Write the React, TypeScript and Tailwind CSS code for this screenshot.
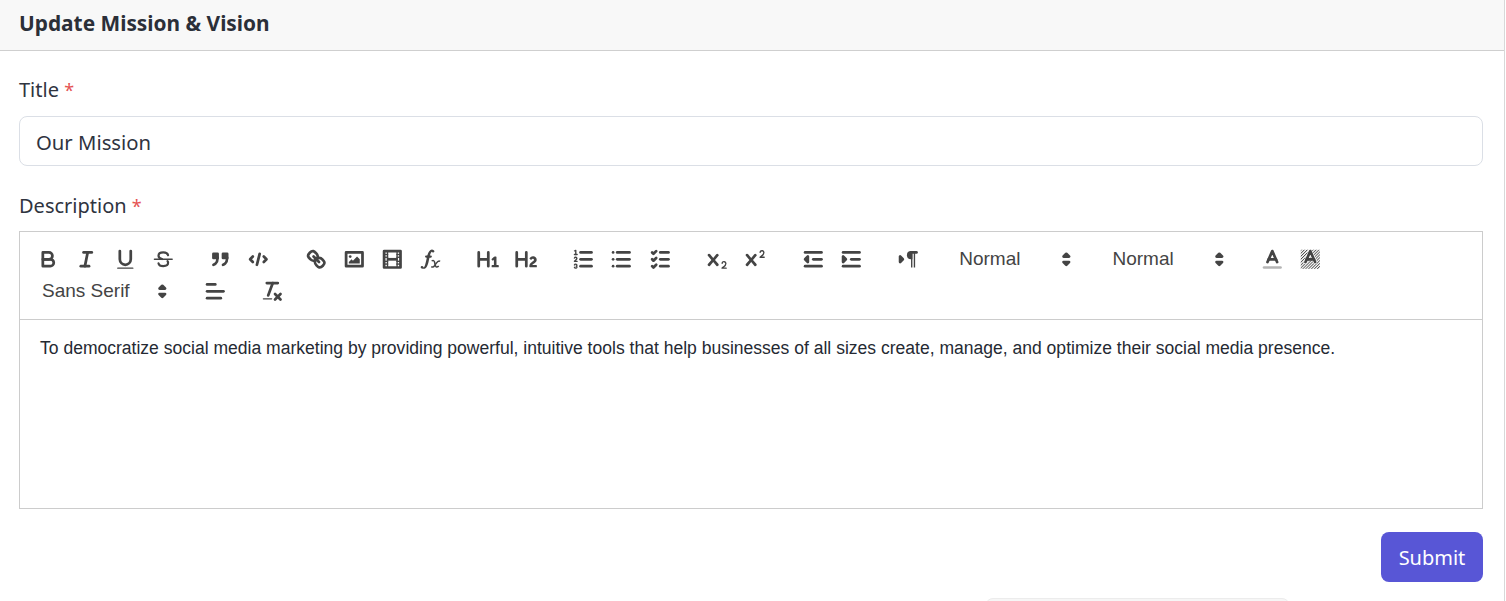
import React from "react";

const S = ({ children }: { children: React.ReactNode }) => (
  <svg viewBox="0 0 18 18" className="w-[24.6px] h-[24.6px] fill-none stroke-[#444] [stroke-width:2px] [stroke-linecap:round] [stroke-linejoin:round]">
    {children}
  </svg>
);
const F = (p: React.SVGProps<SVGPathElement>) => <path {...p} fill="#444" stroke="none" />;
const R = (p: React.SVGProps<SVGRectElement>) => <rect {...p} fill="#444" stroke="none" />;

const Btn = ({ children }: { children: React.ReactNode }) => (
  <button className="w-[38.2px] h-[32.4px] flex items-center justify-center shrink-0">{children}</button>
);
const Group = ({ children }: { children: React.ReactNode }) => (
  <span className="flex mr-[19.2px] shrink-0">{children}</span>
);
const Picker = ({ label, w }: { label: string; w: string }) => (
  <span className={`${w} h-[32.4px] flex items-center justify-between pl-[12.5px] pr-[2px] text-[19px] text-[#444] font-["Liberation_Sans",sans-serif]`}>
    <span>{label}</span>
    <S>
      <polygon points="7 11 9 13 11 11 7 11" fill="#444" />
      <polygon points="7 7 9 5 11 7 7 7" fill="#444" />
    </S>
  </span>
);
const X = "M9.65,5.241a1,1,0,0,0-1.409.108L6,7.964,3.759,5.349A1,1,0,0,0,2.192,6.59178Q2.21541,6.6213,2.241,6.649L4.684,9.5,2.241,12.35A1,1,0,0,0,3.71,13.70722q0.02557-.02768.049-0.05722L6,11.036,8.241,13.65a1,1,0,1,0,1.567-1.24277Q9.78459,12.3777,9.759,12.35L7.316,9.5,9.759,6.651A1,1,0,0,0,9.65,5.241Z";

const Toolbar = () => (
  <div className="flex flex-wrap pl-[9.5px] pt-[11px] pb-[10.8px] border-b border-[#ccc]">
    <Group>
      <Btn><S><path d="M5,4H9.5A2.5,2.5,0,0,1,12,6.5v0A2.5,2.5,0,0,1,9.5,9H5A0,0,0,0,1,5,9V4A0,0,0,0,1,5,4Z" /><path d="M5,9h5.5A2.5,2.5,0,0,1,13,11.5v0A2.5,2.5,0,0,1,10.5,14H5a0,0,0,0,1,0,0V9A0,0,0,0,1,5,9Z" /></S></Btn>
      <Btn><S><line x1="7" x2="13" y1="4" y2="4" /><line x1="5" x2="11" y1="14" y2="14" /><line x1="8" x2="10" y1="14" y2="4" /></S></Btn>
      <Btn><S><path d="M5,3V9a4.012,4.012,0,0,0,4,4H9a4.012,4.012,0,0,0,4-4V3" /><R height="1" rx=".5" ry=".5" width="12" x="3" y="15" /></S></Btn>
      <Btn><S><line x1="2.5" x2="15.5" y1="9" y2="9" className="[stroke-width:1px]" /><path d="M12.5,6C12.2,4.8,10.8,4,9,4C7,4,5.5,5,5.5,6.4C5.5,7.6,6.5,8.4,8,8.8" className="[stroke-width:1.6px]" /><path d="M5.5,12C5.8,13.2,7.2,14,9,14c2,0,3.5-1,3.5-2.4c0-.5-.1-.9-.4-1.3" className="[stroke-width:1.6px]" /></S></Btn>
    </Group>
    <Group>
      <Btn><S><rect fill="#444" height="3" width="3" x="4" y="5" /><rect fill="#444" height="3" width="3" x="11" y="5" /><path d="M7,8c0,4.031-3,5-3,5" /><path d="M14,8c0,4.031-3,5-3,5" /></S></Btn>
      <Btn><S><polyline points="5 7 3 9 5 11" /><polyline points="13 7 15 9 13 11" /><line x1="10" x2="8" y1="5" y2="13" /></S></Btn>
    </Group>
    <Group>
      <Btn><S><line x1="7" x2="11" y1="7" y2="11" /><path d="M8.9,4.577a3.476,3.476,0,0,1,.36,4.679A3.476,3.476,0,0,1,4.577,8.9C3.185,7.5,2.035,6.4,4.217,4.217S7.5,3.185,8.9,4.577Z" /><path d="M13.423,9.1a3.476,3.476,0,0,0-4.679-.36,3.476,3.476,0,0,0,.36,4.679c1.392,1.392,2.5,2.542,4.679.36S14.815,10.5,13.423,9.1Z" /></S></Btn>
      <Btn><S><rect height="10" width="12" x="3" y="4" /><circle cx="6" cy="7" r="1" fill="#444" stroke="none" /><polyline points="5 12 5 11 7 9 8 10 11 7 13 9 13 12 5 12" fill="#444" stroke="none" /></S></Btn>
      <Btn><S><rect height="12" width="12" x="3" y="3" /><R height="12" width="1" x="5" y="3" /><R height="12" width="1" x="12" y="3" /><R height="2" width="8" x="5" y="8" /><R height="1" width="3" x="3" y="5" /><R height="1" width="3" x="3" y="7" /><R height="1" width="3" x="3" y="10" /><R height="1" width="3" x="3" y="12" /><R height="1" width="3" x="12" y="5" /><R height="1" width="3" x="12" y="7" /><R height="1" width="3" x="12" y="10" /><R height="1" width="3" x="12" y="12" /></S></Btn>
      <Btn><S><F d="M11.759,2.482a2.561,2.561,0,0,0-3.53.607A7.656,7.656,0,0,0,6.8,6.2C6.109,9.188,5.275,14.677,4.15,14.927a1.545,1.545,0,0,0-1.3-.933A0.922,0.922,0,0,0,2,15.036S1.954,16,4.119,16s3.091-2.691,3.7-5.553c0.177-.826.36-1.726,0.554-2.6L8.775,6.2c0.381-1.421.807-2.521,1.306-2.676a1.014,1.014,0,0,0,1.02.56A0.966,0.966,0,0,0,11.759,2.482Z" /><R height="1.6" rx=".8" ry=".8" width="5" x="5.15" y="6.2" /><path d="M10,10.2c1.1,-.5 1.8,-.3 2.1,.8l.7,2.8c.3,1 1,1.3 2.4,.2" className="[stroke-width:1.1px] [stroke-linecap:butt]" /><path d="M16.2,10.5c-1.1,-.7 -1.9,0 -2.9,1.5l-1.2,1.7c-.7,1 -1.4,1.2 -2.4,.6" className="[stroke-width:1.1px] [stroke-linecap:butt]" /></S></Btn>
    </Group>
    <Group>
      <Btn><S><F d="M10,4V14a1,1,0,0,1-2,0V10H3v4a1,1,0,0,1-2,0V4A1,1,0,0,1,3,4V8H8V4a1,1,0,0,1,2,0Zm6.06787,9.209H14.98975V7.59863a.54085.54085,0,0,0-.605-.60547h-.62744a1.01119,1.01119,0,0,0-.748.29688L11.645,8.56641a.5435.5435,0,0,0-.022.8584l.28613.30762a.53861.53861,0,0,0,.84717.0332l.09912-.08789a1.2137,1.2137,0,0,0,.2417-.35254h.02246s-.01123.30859-.01123.60547V13.209H12.041a.54085.54085,0,0,0-.605.60547v.43945a.54085.54085,0,0,0,.605.60547h4.02686a.54085.54085,0,0,0,.605-.60547v-.43945A.54085.54085,0,0,0,16.06787,13.209Z" /></S></Btn>
      <Btn><S><F d="M16.73975,13.81445v.43945a.54085.54085,0,0,1-.605.60547H11.855a.58392.58392,0,0,1-.64893-.60547V14.0127c0-2.90527,3.39941-3.42187,3.39941-4.55469a.77675.77675,0,0,0-.84717-.78125,1.17684,1.17684,0,0,0-.83594.38477c-.2749.26367-.561.374-.85791.13184l-.4292-.34082c-.30811-.24219-.38525-.51758-.1543-.81445a2.97155,2.97155,0,0,1,2.45361-1.17676,2.45393,2.45393,0,0,1,2.68408,2.40918c0,2.45312-3.1792,2.92676-3.27832,3.93848h2.79443A.54085.54085,0,0,1,16.73975,13.81445ZM9,3A.99974.99974,0,0,0,8,4V8H3V4A1,1,0,0,0,1,4V14a1,1,0,0,0,2,0V10H8v4a1,1,0,0,0,2,0V4A.99974.99974,0,0,0,9,3Z" /></S></Btn>
    </Group>
    <Group>
      <Btn><S><line x1="7" x2="15" y1="4" y2="4" /><line x1="7" x2="15" y1="9" y2="9" /><line x1="7" x2="15" y1="14" y2="14" /><line x1="2.5" x2="4.5" y1="5.5" y2="5.5" className="[stroke-width:1px]" /><F d="M3.5,6A0.5,0.5,0,0,1,3,5.5V3.085l-0.276.138A0.5,0.5,0,0,1,2.053,3c-0.124-.247-0.023-0.324.224-0.447l1-.5A0.5,0.5,0,0,1,4,2.5v3A0.5,0.5,0,0,1,3.5,6Z" /><path d="M4.5,10.5h-2c0-.234,1.85-1.076,1.85-2.234A0.959,0.959,0,0,0,2.5,8.156" className="[stroke-width:1px]" /><path d="M2.5,14.846a0.959,0.959,0,0,0,1.85-.109A0.7,0.7,0,0,0,3.75,14a0.688,0.688,0,0,0,.6-0.736,0.959,0.959,0,0,0-1.85-.109" className="[stroke-width:1px]" /></S></Btn>
      <Btn><S><line x1="6" x2="15" y1="4" y2="4" /><line x1="6" x2="15" y1="9" y2="9" /><line x1="6" x2="15" y1="14" y2="14" /><line x1="3" x2="3" y1="4" y2="4" /><line x1="3" x2="3" y1="9" y2="9" /><line x1="3" x2="3" y1="14" y2="14" /></S></Btn>
      <Btn><S><line x1="9" x2="15" y1="4" y2="4" /><polyline points="3 4 4 5 6 3" /><line x1="9" x2="15" y1="14" y2="14" /><polyline points="3 14 4 15 6 13" /><line x1="9" x2="15" y1="9" y2="9" /><polyline points="3 9 4 10 6 8" /></S></Btn>
    </Group>
    <Group>
      <Btn><S><F d="M15.5,15H13.861a3.858,3.858,0,0,0,1.914-2.975,1.8,1.8,0,0,0-1.6-1.751A1.921,1.921,0,0,0,12.021,11.7a0.50013,0.50013,0,1,0,.957.291h0a0.914,0.914,0,0,1,1.053-.725,0.81,0.81,0,0,1,.744.762c0,1.076-1.16971,1.86982-1.93971,2.43082A1.45639,1.45639,0,0,0,12,15.5a0.5,0.5,0,0,0,.5.5h3A0.5,0.5,0,0,0,15.5,15Z" /><F d={X} /></S></Btn>
      <Btn><S><F d="M15.5,7H13.861a4.015,4.015,0,0,0,1.914-2.975,1.8,1.8,0,0,0-1.6-1.751A1.922,1.922,0,0,0,12.021,3.7a0.5,0.5,0,1,0,.957.291,0.917,0.917,0,0,1,1.053-.725,0.81,0.81,0,0,1,.744.762c0,1.077-1.164,1.925-1.934,2.486A1.423,1.423,0,0,0,12,7.5a0.5,0.5,0,0,0,.5.5h3A0.5,0.5,0,0,0,15.5,7Z" /><F d={X} /></S></Btn>
    </Group>
    <Group>
      <Btn><S><line x1="3" x2="15" y1="14" y2="14" /><line x1="3" x2="15" y1="4" y2="4" /><line x1="9" x2="15" y1="9" y2="9" /><polyline points="5 7 5 11 3 9 5 7" fill="#444" /></S></Btn>
      <Btn><S><line x1="3" x2="15" y1="14" y2="14" /><line x1="3" x2="15" y1="4" y2="4" /><line x1="9" x2="15" y1="9" y2="9" /><polyline points="3 7 3 11 5 9 3 7" fill="#444" /></S></Btn>
    </Group>
    <Group>
      <Btn><S><polygon points="3 11 5 9 3 7 3 11" fill="#444" /><line x1="15" x2="11" y1="4" y2="4" /><F d="M11,3a3,3,0,0,0,0,6h1V3H11Z" /><R height="11" width="1" x="11" y="4" /><R height="11" width="1" x="13" y="4" /></S></Btn>
    </Group>
    <Group><Picker label="Normal" w="w-[134px]" /></Group>
    <Group><Picker label="Normal" w="w-[134px]" /></Group>
    <Group>
      <Btn><S><line x1="3" x2="15" y1="15" y2="15" stroke="#444" opacity="0.4" /><polyline points="5.5 11 9 3 12.5 11" /><line x1="11.63" x2="6.38" y1="9" y2="9" /></S></Btn>
      <Btn>
        <S>
          <defs>
            <pattern id="hatch" width="1.5" height="1.5" patternUnits="userSpaceOnUse" patternTransform="rotate(45)">
              <rect width="0.6" height="1.5" fill="#444" stroke="none" />
            </pattern>
          </defs>
          <rect x="2" y="2" width="14" height="14" fill="url(#hatch)" stroke="none" />
          <polyline points="5.5 11 9 3 12.5 11" stroke="#fff" className="[stroke-width:3px]" />
          <polyline points="5.5 11 9 3 12.5 11" />
          <line x1="11.63" x2="6.38" y1="9" y2="9" />
        </S>
      </Btn>
    </Group>
    <Group><Picker label="Sans Serif" w="w-[147.5px]" /></Group>
    <Group>
      <Btn><S><line x1="3" x2="15" y1="9" y2="9" /><line x1="3" x2="13" y1="14" y2="14" /><line x1="3" x2="9" y1="4" y2="4" /></S></Btn>
    </Group>
    <Group>
      <Btn><S><line x1="5" x2="13" y1="3" y2="3" /><line x1="6" x2="9.35" y1="12" y2="3" /><line x1="11" x2="15" y1="11" y2="15" /><line x1="15" x2="11" y1="11" y2="15" /><R height="1" rx=".5" ry=".5" width="7" x="2" y="14" /></S></Btn>
    </Group>
  </div>
);

export default function App() {
  return (
    <div className="relative h-[601px] overflow-hidden bg-white font-['Noto_Sans',sans-serif] text-[#2f343f]">
      <div className="border-r border-[#d8d8d8] mr-[1px] h-full">
        <div className="h-[51px] bg-[#f8f8f8] border-b border-[#cfcfcf] px-[19px] pb-[2px] flex items-center">
          <h1 className="text-[20.85px] font-bold text-[#2b2f38]">Update Mission &amp; Vision</h1>
        </div>
        <div className="pl-[19px] pr-[21px] pt-[25px]">
          <label className="block text-[20px] leading-[28px]">
            Title <span className="text-[#e55353] text-[18px]">*</span>
          </label>
          <div className="mt-[12px] h-[50px] border border-[#dbdfe6] rounded-[8px] pl-[16px] pt-[2px] flex items-center text-[20.3px]">Our Mission</div>
          <label className="block text-[20px] leading-[28px] mt-[25px] pt-[1px] -mb-[1px]">
            Description <span className="text-[#e55353] text-[18px]">*</span>
          </label>
          <div className="mt-[12px] border border-[#ccc]">
            <Toolbar />
            <div className="h-[188px] pl-[20px] pt-[16px] text-[17.54px] leading-[24px] text-[#252a33] font-['Liberation_Sans',sans-serif]">
              To democratize social media marketing by providing powerful, intuitive tools that help businesses of all sizes create, manage, and optimize their social media presence.
            </div>
          </div>
          <div className="flex justify-end mt-[23px]">
            <button className="w-[102px] h-[50px] rounded-[8px] bg-[#5856d6] text-white text-[20px] pt-[2px]">Submit</button>
          </div>
        </div>
      </div>
      <div className="absolute left-[985px] top-[598px] w-[305px] h-[20px] rounded-t-[8px] bg-[#f6f6f6] border border-[#ececec]" />
    </div>
  );
}
